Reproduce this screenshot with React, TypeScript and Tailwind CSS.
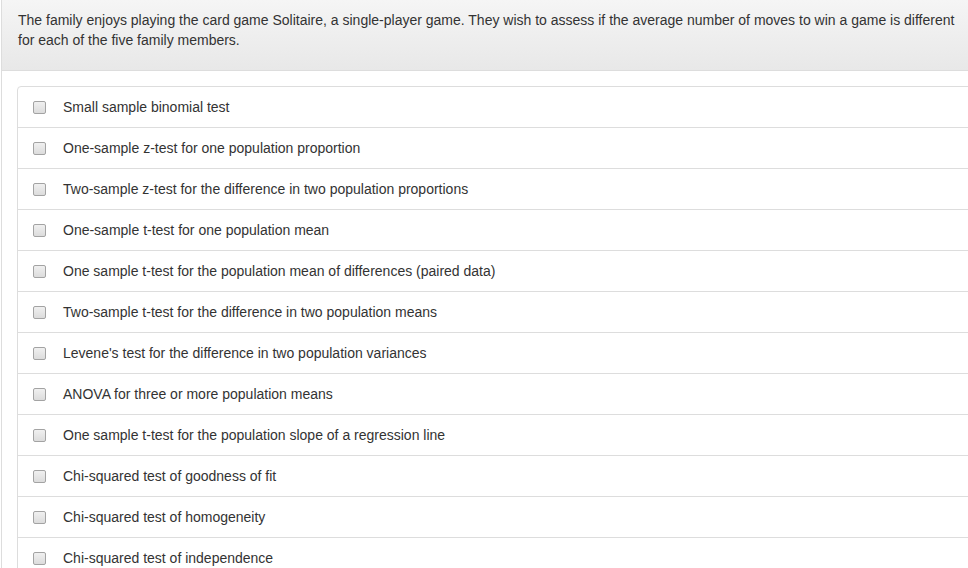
const options = [
  "Small sample binomial test",
  "One-sample z-test for one population proportion",
  "Two-sample z-test for the difference in two population proportions",
  "One-sample t-test for one population mean",
  "One sample t-test for the population mean of differences (paired data)",
  "Two-sample t-test for the difference in two population means",
  "Levene's test for the difference in two population variances",
  "ANOVA for three or more population means",
  "One sample t-test for the population slope of a regression line",
  "Chi-squared test of goodness of fit",
  "Chi-squared test of homogeneity",
  "Chi-squared test of independence",
];

export default function App() {
  return (
    <div
      className="w-[968px] h-[568px] overflow-hidden bg-white pl-px text-[#333] text-[14px]"
      style={{ fontFamily: '"Liberation Sans", Arial, sans-serif' }}
    >
      <div className="w-[1000px] min-h-[600px] border-l border-[#ddd]">
        {/* Question heading */}
        <div className="pl-[16px] pt-[10px] pb-[20px] bg-gradient-to-b from-[#f5f5f5] to-[#e8e8e8] border-b border-[#ddd]">
          <p className="max-w-[945px] leading-[20px]">
            The family enjoys playing the card game Solitaire, a single-player game. They wish to assess if the
            average number of moves to win a game is different for each of the five family members.
          </p>
        </div>

        {/* Answer options */}
        <div className="p-[15px]">
          <div className="flex flex-col">
            {options.map((opt, i) => (
              <label
                key={i}
                className={
                  "flex items-center px-[15px] py-[10px] border border-[#ddd] leading-[20px] " +
                  (i === 0 ? "rounded-tl-[4px]" : "-mt-px")
                }
              >
                <span className="w-[13px] h-[13px] rounded-[2px] border border-[#a3a3a3] bg-gradient-to-b from-[#f0f0f0] to-[#dcdcdc] shrink-0" />
                <span className="ml-[17px]">{opt}</span>
              </label>
            ))}
          </div>
        </div>
      </div>
    </div>
  );
}
